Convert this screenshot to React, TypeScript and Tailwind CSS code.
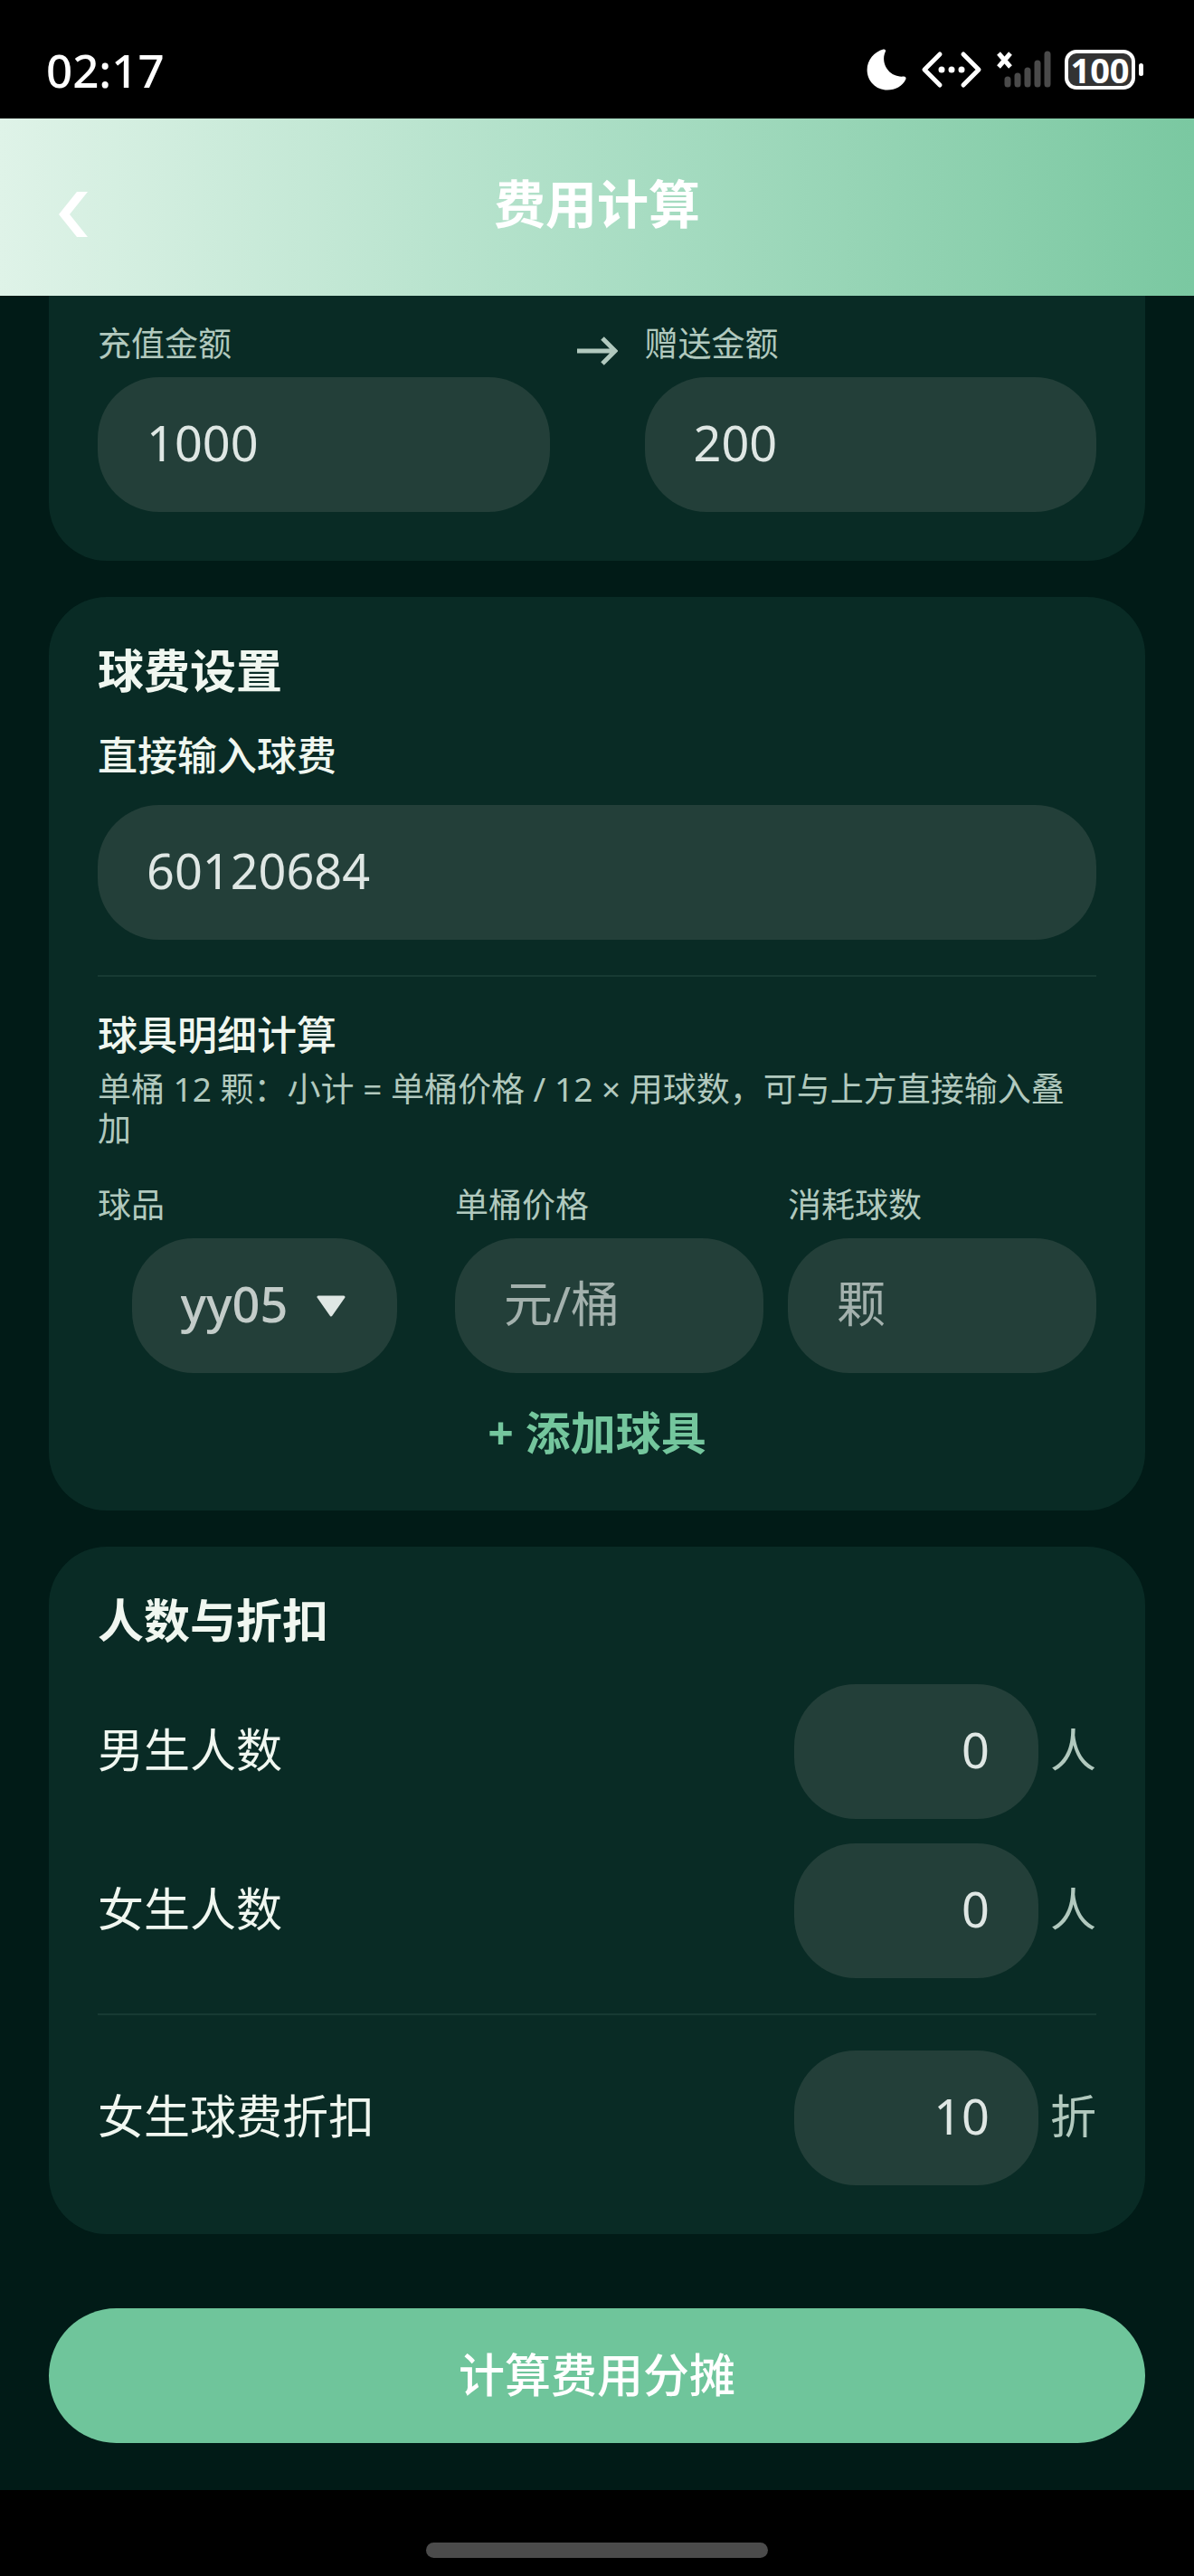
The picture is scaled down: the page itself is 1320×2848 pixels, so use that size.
import { useState } from "react";
import type { ReactNode } from "react";
import clsx from "clsx";

const fieldClass =
	"block h-[149px] w-full min-w-0 rounded-[68px] bg-[#233f39] px-[54px] pb-[5px] text-[54px] text-[#dfe7e4] outline-none placeholder:text-[#a3b1ad] placeholder:opacity-100";

function StatusBar() {
	return (
		<div className="flex h-[131px] items-center justify-between bg-black pt-[26px] pr-[56px] pb-[4px] pl-[51px] text-white">
			<span className="text-[51px] leading-[60px] font-medium">02:17</span>
			<div className="flex items-center">
				<svg aria-hidden="true" className="mr-[16px] h-[46px] w-[44px]" viewBox="0 0 44 46">
					<path
						d="M18.500.6c1.900-.7 3.200.9 2.300 2.700-5.600 11.600 3.200 28.700 20 27.300 2.100-.2 3.300 1.300 2.500 3.200C39.700 41.200 32 45.600 23 45.600 10.500 45.600.6 35.800.6 23.300.6 12.600 8.500 3.300 18.500.6Z"
						fill="currentColor"
					/>
				</svg>
				<svg
					aria-hidden="true"
					className="mr-[16px] h-[42px] w-[68px]"
					fill="none"
					stroke="currentColor"
					strokeLinecap="round"
					strokeLinejoin="round"
					strokeWidth="5"
					viewBox="0 0 68 42"
				>
					<path d="M21 4 4 21 21 38M47 4 64 21 47 38" />
					<path d="M23 21h.01M34 21h.01M45 21h.01" strokeWidth="7" />
				</svg>
				<svg aria-hidden="true" className="mr-[15px] h-[42px] w-[60px]" viewBox="0 0 60 42">
					<path d="M2 3 15 18M15 3 2 18" stroke="currentColor" strokeWidth="5" />
					<path
						d="M12 32V37M23 28V37M34 22V37M45 14V37M56 4V37"
						stroke="#4a4a4a"
						strokeLinecap="round"
						strokeWidth="7"
					/>
				</svg>
				<div className="flex h-[44px] w-[78px] items-center justify-center rounded-[13px] border-[4px] border-white bg-[#333] text-[38px] leading-[36px] font-bold">
					100
				</div>
				<div className="ml-[4px] h-[14px] w-[5px] rounded-full bg-white" />
			</div>
		</div>
	);
}

function Header() {
	return (
		<header className="grid h-[196px] grid-cols-[1fr_auto_1fr] items-center bg-linear-to-r from-[#dff3e8] via-[#abdec5] to-[#7ac8a1] px-[54px] text-white">
			<button aria-label="返回" className="flex h-[80px] w-[54px] items-center pt-[16px] pl-[11px]" type="button">
				<svg aria-hidden="true" className="h-[50px] w-[32px]" viewBox="0 0 32 50">
					<path d="M20 0h12L12 25l20 25H20L0 25Z" fill="currentColor" />
				</svg>
			</button>
			<h1 className="pb-[8px] text-[57px] leading-[72px] font-bold">费用计算</h1>
		</header>
	);
}

function Card({ children, className }: { children: ReactNode; className?: string }) {
	return (
		<section className={clsx("bg-[#092b25] px-[54px] pb-[54px]", className ?? "rounded-[64px] pt-[54px]")}>
			{children}
		</section>
	);
}

function Field({ id, label, children }: { id: string; label: string; children: ReactNode }) {
	return (
		<div className="min-w-0">
			<label className="mb-[15px] block text-[37px] leading-[44px] text-[#b1c9be]" htmlFor={id}>
				{label}
			</label>
			{children}
		</div>
	);
}

function CountRow({ id, label, unit, initial }: { id: string; label: string; unit: string; initial: string }) {
	const [value, setValue] = useState(initial);

	return (
		<div className="flex items-center">
			<label className="flex-1 pb-[5px] text-[51px] leading-[60px] text-[#f0f7f0]" htmlFor={id}>
				{label}
			</label>
			<div className="w-[270px]">
				<input
					className={clsx(fieldClass, "text-right")}
					id={id}
					inputMode="numeric"
					onChange={(e) => setValue(e.target.value)}
					value={value}
				/>
			</div>
			<span className="ml-[13px] pb-[5px] text-[51px] leading-[60px] text-[#b1c9be]">{unit}</span>
		</div>
	);
}

function Divider() {
	return <hr className="my-[39px] border-t-2 border-[#173a33]" />;
}

export default function App() {
	const [recharge, setRecharge] = useState("1000");
	const [bonus, setBonus] = useState("200");
	const [fee, setFee] = useState("60120684");

	return (
		<div
			className="min-h-screen bg-[#011b17] font-['Noto_Sans','Noto_Sans_CJK_SC',sans-serif]"
			lang="zh-CN"
		>
			<StatusBar />
			<Header />

			<main className="flex flex-col gap-[40px] px-[54px] pb-[52px]">
				<Card className="rounded-b-[64px] pt-[31px]">
					<div className="grid grid-cols-[1fr_auto_1fr]">
						<Field id="recharge" label="充值金额">
							<input
								className={fieldClass}
								id="recharge"
								inputMode="numeric"
								onChange={(e) => setRecharge(e.target.value)}
								value={recharge}
							/>
						</Field>
						<div className="flex h-[60px] w-[105px] items-center justify-center text-[#b1c9be]">
							<svg
								aria-hidden="true"
								className="h-[32px] w-[46px]"
								fill="none"
								stroke="currentColor"
								strokeWidth="5"
								viewBox="0 0 46 32"
							>
								<path d="M1 16h42M29 2 43 16 29 30" />
							</svg>
						</div>
						<Field id="bonus" label="赠送金额">
							<input
								className={fieldClass}
								id="bonus"
								inputMode="numeric"
								onChange={(e) => setBonus(e.target.value)}
								value={bonus}
							/>
						</Field>
					</div>
				</Card>

				<Card>
					<h2 className="text-[51px] leading-[54px] font-bold text-[#f0f7f0]">球费设置</h2>
					<label
						className="mt-[42px] mb-[30px] block text-[44px] leading-[50px] font-medium text-[#f0f7f0]"
						htmlFor="fee"
					>
						直接输入球费
					</label>
					<input
						className={fieldClass}
						id="fee"
						inputMode="numeric"
						onChange={(e) => setFee(e.target.value)}
						value={fee}
					/>
					<Divider />
					<h3 className="text-[44px] leading-[50px] font-medium text-[#f0f7f0]">球具明细计算</h3>
					<p className="mt-[13px] mb-[40px] text-[37px] leading-[44px] text-[#b1c9be]">
						单桶 12 颗：小计 = 单桶价格 / 12 × 用球数，可与上方直接输入叠加
					</p>
					<div className="grid grid-cols-[368fr_341fr_341fr] gap-[27px]">
						<Field id="ball" label="球品">
							<div className="relative mx-auto w-[293px]">
								<select
									className="block h-[149px] w-full appearance-none rounded-[68px] bg-[#233f39] pb-[5px] pl-[54px] text-[54px] font-medium text-[#c3ccc9] outline-none"
									id="ball"
								>
									<option>yy05</option>
								</select>
								<svg
									aria-hidden="true"
									className="pointer-events-none absolute top-1/2 right-[56px] h-[24px] w-[34px] -translate-y-1/2"
									viewBox="0 0 34 24"
								>
									<path
										d="M3 2h28L17 22Z"
										fill="#dfe7e4"
										stroke="#dfe7e4"
										strokeLinejoin="round"
										strokeWidth="3"
									/>
								</svg>
							</div>
						</Field>
						<Field id="price" label="单桶价格">
							<input className={fieldClass} id="price" inputMode="decimal" placeholder="元/桶" />
						</Field>
						<Field id="used" label="消耗球数">
							<input className={fieldClass} id="used" inputMode="numeric" placeholder="颗" />
						</Field>
					</div>
					<button
						className="mx-auto mt-[36px] mb-[2px] block text-[50px] leading-[60px] font-bold text-[#74c69d]"
						type="button"
					>
						+ 添加球具
					</button>
				</Card>

				<Card>
					<h2 className="mb-[44px] text-[51px] leading-[54px] font-bold text-[#f0f7f0]">人数与折扣</h2>
					<div className="flex flex-col gap-[27px]">
						<CountRow id="male" initial="0" label="男生人数" unit="人" />
						<CountRow id="female" initial="0" label="女生人数" unit="人" />
					</div>
					<Divider />
					<CountRow id="discount" initial="10" label="女生球费折扣" unit="折" />
				</Card>

				<button
					className="mt-[42px] h-[149px] rounded-full bg-[#6fc59b] pb-[3px] text-[51px] font-medium text-white"
					type="button"
				>
					计算费用分摊
				</button>
			</main>

			<div className="flex h-[95px] items-center justify-center bg-black pt-[38px] pb-[1px]">
				<div className="h-[17px] w-[378px] rounded-full bg-[#4b4b4b]" />
			</div>
		</div>
	);
}
